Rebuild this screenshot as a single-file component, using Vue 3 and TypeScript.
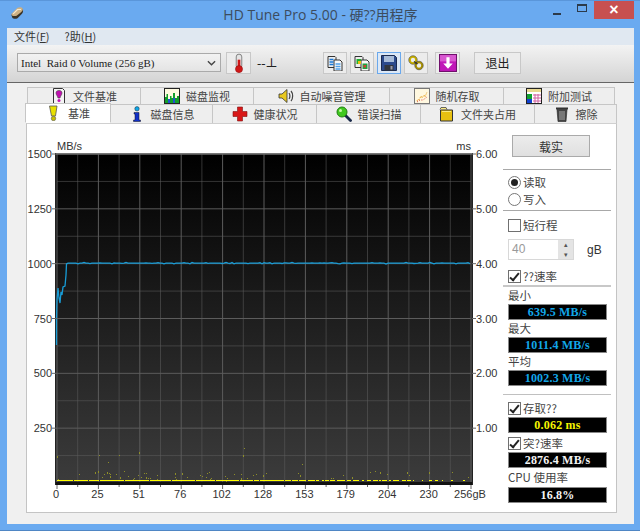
<script setup lang="ts">
import { computed } from 'vue'

interface Tab { label: string; icon: string; w: number; active?: boolean }

const icons: Record<string, string> = {
  doc: '<path d="M2.5.5h9l2 2v13h-11z" fill="#f4f4f4" stroke="#333"/><path d="M8 2.5c-2 0-3 1-3 2.5 0 1.5 1.5 3 2 5h2c.5-2 2-3.500 2-5 0-1.500-1-2.500-3-2.500z" fill="#c010b0" stroke="#444" stroke-width=".6"/><circle cx="8" cy="12.500" r="1.500" fill="#c010b0"/>',
  chart: '<rect x=".5" y=".5" width="15" height="15" fill="#fffbe0" stroke="#222"/><path d="M1 15V9h1.500V6H4v5h2V8h1.500v2H9V5h2v5h2V8h2v7z" fill="#12a02a"/><path d="M4 15v-4h2v4zM9 15v-5h2v5z" fill="#2050d0"/>',
  speaker: '<path d="M1 6h3l5-4.500v13L4 10H1z" fill="#e8c820" stroke="#333" stroke-width=".8"/><path d="M11 5c1.200 1.500 1.200 4.500 0 6M13 3c2.200 2.500 2.200 7.500 0 10" fill="none" stroke="#444" stroke-width="1.200"/>',
  random: '<rect x=".5" y=".5" width="15" height="15" fill="#fff8e0" stroke="#777"/><path d="M3 13l1-2 1 1 2-4 1 2 2-3 1 2 2-5" fill="none" stroke="#e8a020" stroke-dasharray="1 1"/><path d="M3 14l3-2 3 0 4-3" fill="none" stroke="#d84040" stroke-dasharray="1 1.500"/>',
  extra: '<rect x=".5" y=".5" width="15" height="15" fill="#fff" stroke="#222"/><rect x="1" y="1" width="14" height="3" fill="#e8d890"/><rect x="1" y="6" width="5" height="9" fill="#10a030"/><rect x="1" y="11" width="5" height="4" fill="#1040d0"/><path d="M7 7h8M7 10h8M7 13h8M9 6v9M12 6v9" stroke="#d060a0"/>',
  bulb: '<path d="M3.500 1h7.500l-1.500 10H5.500z" fill="#e8e000" stroke="#555" stroke-width=".8"/><circle cx="7.500" cy="13.500" r="2.200" fill="#c8c000" stroke="#555" stroke-width=".6"/>',
  info: '<circle cx="8" cy="2.800" r="2.200" fill="#10a8e8" stroke="#123" stroke-width=".5"/><path d="M5 6.500h5V14h1.500v1.500h-7V14H6V8H5z" fill="#1030c8" stroke="#112" stroke-width=".5"/>',
  cross: '<path d="M5.500 1h5v4.500H15v5h-4.500V15h-5v-4.500H1v-5h4.500z" fill="#d81818" stroke="#801010" stroke-width=".6"/>',
  search: '<path d="M9 9l5.500 5.500" stroke="#182848" stroke-width="2.800" stroke-linecap="round"/><circle cx="6" cy="6" r="5" fill="#40c820" stroke="#208010"/><circle cx="4.500" cy="4.500" r="1.500" fill="#c8f8a8"/>',
  folder: '<path d="M1 3.500l1-2h5l1 2" fill="#f8e880" stroke="#444" stroke-width=".8"/><path d="M1.500 4h12v11h-12z" fill="#e8c010" stroke="#333"/><path d="M3 5.500h9" stroke="#f8e880"/>',
  trash: '<path d="M3 3.500h10L12 15.500H4z" fill="#444" stroke="#222" stroke-width=".6"/><path d="M2 2.500h12" stroke="#333" stroke-width="2"/><path d="M6 5v9M8 5v9M10 5v9" stroke="#aaa"/>',
  copyBlue: '<path d="M1 1.500h7l1 1v10H1z" fill="#eee" stroke="#333"/><path d="M7 5h6l2 2v9H7z" fill="#f8f8f8" stroke="#333"/><path d="M2.500 4.500h4M2.500 7h4M2.500 9.500h4" stroke="#1878d8" stroke-width="1.500"/><path d="M8.500 9h5M8.500 11.500h5M8.500 14h5" stroke="#50a0e8" stroke-width="1.500"/>',
  copyChart: '<path d="M1 1.500h7l1 1v10H1z" fill="#eee" stroke="#333"/><path d="M7 5h6l2 2v9H7z" fill="#f8f8f8" stroke="#333"/><rect x="2.500" y="4" width="4.500" height="5" fill="#20b030"/><rect x="4" y="6" width="3" height="3" fill="#e8c010"/><rect x="8.500" y="8.500" width="5" height="5.500" fill="#20a040"/><rect x="9.500" y="10" width="2.500" height="2.500" fill="#d04030"/>',
  save: '<path d="M.5.500h13l2 2v13H.5z" fill="#2c4a8c" stroke="#1a2a50"/><rect x="3" y="1" width="10" height="6" fill="#a8bcd8"/><rect x="3.500" y="10" width="9" height="5.500" fill="#32363c"/><rect x="9.500" y="11" width="2" height="3.500" fill="#99a"/>',
  chain: '<circle cx="5" cy="5" r="3.200" fill="none" stroke="#c8b000" stroke-width="2"/><circle cx="11" cy="10.500" r="3.200" fill="none" stroke="#a89000" stroke-width="2"/><path d="M6 6.500l3.500 2.500" stroke="#333" stroke-width="1.500"/><circle cx="5" cy="5" r="4.300" fill="none" stroke="#333" stroke-width=".5"/><circle cx="11" cy="10.500" r="4.300" fill="none" stroke="#333" stroke-width=".5"/>',
  down: '<rect x=".5" y=".5" width="16" height="16" fill="#c018b8" stroke="#70106c"/><rect x="1" y="1" width="15" height="6" fill="#d858d0"/><path d="M7 3h3v6h3l-4.500 5L4 9h3z" fill="#fff"/>',
  thermo: '<rect x="5.500" y="1" width="5" height="13" rx="2.500" fill="#e4e4e4" stroke="#666" stroke-width=".7"/><rect x="6.800" y="6" width="2.400" height="8" fill="#d01818"/><circle cx="8" cy="14.500" r="3.200" fill="#d01818" stroke="#901010" stroke-width=".5"/>',
}

const upperTabs: Tab[] = [
  { label: '文件基准', icon: 'doc', w: 114 },
  { label: '磁盘监视', icon: 'chart', w: 113 },
  { label: '自动噪音管理', icon: 'speaker', w: 136 },
  { label: '随机存取', icon: 'random', w: 114 },
  { label: '附加测试', icon: 'extra', w: 111 },
]

const lowerTabs: Tab[] = [
  { label: '基准', icon: 'bulb', w: 86, active: true },
  { label: '磁盘信息', icon: 'info', w: 102 },
  { label: '健康状况', icon: 'cross', w: 104 },
  { label: '错误扫描', icon: 'search', w: 104 },
  { label: '文件夹占用', icon: 'folder', w: 114 },
  { label: '擦除', icon: 'trash', w: 82 },
]

const toolButtons = [
  { icon: 'copyBlue' },
  { icon: 'copyChart' },
  { icon: 'save', focused: true },
  { icon: 'chain' },
]

// chart geometry, in window coordinates (the svg viewBox starts at the panel corner)
const plot = { left: 57, right: 471, top: 154, bottom: 483 }
const cellW = (plot.right - plot.left) / 20
const cellH = (plot.bottom - plot.top) / 12

const leftLabels = [
  { t: '1500', row: 0 }, { t: '1250', row: 2 }, { t: '1000', row: 4 },
  { t: '750', row: 6 }, { t: '500', row: 8 }, { t: '250', row: 10 },
]
const rightLabels = ['6.00', '5.00', '4.00', '3.00', '2.00', '1.00']
const xLabels = ['0', '25', '51', '76', '102', '128', '153', '179', '204', '230', '256gB']

const gridX = computed(() => Array.from({ length: 21 }, (_, i) => plot.left + i * cellW))
const gridY = computed(() => Array.from({ length: 12 }, (_, i) => plot.top + i * cellH))

let seed = 37
function rnd() {
  seed = (seed * 16807) % 2147483647
  return seed / 2147483647
}

const readPath = computed(() => {
  let d = 'M56.5 345L56.5 320L57 300L58 288L59 298L60 303L61 292L62 295L63 287L65 286L66 275L66.500 264'
  for (let x = 68; x <= 471; x += 2) {
    d += `L${x} ${(263.2 + (rnd() > 0.7 ? (rnd() - 0.5) * 1.6 : 0)).toFixed(1)}`
  }
  return d
})

const accessLine = computed(() => {
  const out: { x: number; w: number }[] = []
  let x = 57
  while (x < 470) {
    // solid near the start of the disk, broken up further along
    const w = x < 290 ? 3 + Math.floor(rnd() * 22) : x < 410 ? 2 + Math.floor(rnd() * 7) : 1 + Math.floor(rnd() * 3)
    out.push({ x, w: Math.min(w, 471 - x) })
    x += w + (x < 290 ? 1 : x < 410 ? 1 + Math.floor(rnd() * 3) : 3 + Math.floor(rnd() * 8))
  }
  return out
})

const accessDots = computed(() => {
  const out = [
    { x: 57, y: 456 }, { x: 99, y: 455 }, { x: 108, y: 462 }, { x: 119, y: 455 }, { x: 139, y: 452 },
    { x: 244, y: 448 }, { x: 302, y: 464 }, { x: 207, y: 473 }, { x: 243, y: 455 }, { x: 343, y: 475 },
  ]
  for (let i = 0; i < 80; i++) {
    const x = 58 + rnd() * 412
    // the scatter thins out towards the end of the disk
    if (x > 300 && rnd() > 0.45) continue
    out.push({ x: Math.round(x), y: Math.round(471 + rnd() * 9) })
  }
  return out
})
</script>

<template>
  <div class="window">
    <div class="titlebar">
      <svg class="app-icon" viewBox="0 0 16 16" width="15" height="14">
        <path d="M1 10l7-7c2-1 5-1 6 1 1 2 0 4-2 6l-4 4c-2 1-5 1-6-1z" fill="#3a3428" />
        <path d="M1 9l7-7c2-1 5-1 6 1 .6 1.400-1 3-2 4l-5 4c-2 1-6 .5-6-2z" fill="#cdb184" />
        <path d="M3 9l5-5 4 0" fill="none" stroke="#f4e8d0" stroke-width="1.400" />
      </svg>
      <span class="title">HD Tune Pro 5.00 - 硬??用程序</span>
      <div class="caption">
        <span class="cap-btn"><i class="min" /></span>
        <span class="cap-btn"><i class="max" /></span>
        <span class="cap-btn close">×</span>
      </div>
    </div>

    <div class="client">
      <div class="menubar">
        <span>文件(<u>F</u>)</span>
        <span>?助(<u>H</u>)</span>
      </div>

      <div class="toolbar">
        <div class="combo">
          <span>Intel&nbsp; Raid 0 Volume (256 gB)</span>
          <svg viewBox="0 0 10 6" width="9" height="6"><path d="M1 1l4 4 4-4" fill="none" stroke="#444" stroke-width="1.500" /></svg>
        </div>
        <button class="tool thermo"><svg viewBox="0 0 16 18" width="18" height="20" v-html="icons.thermo" /></button>
        <span class="temp">--⊥</span>
        <div class="tool-group">
          <button v-for="b in toolButtons" :key="b.icon" class="tool" :class="{ focused: b.focused }">
            <svg viewBox="0 0 16 16" width="16" height="16" v-html="icons[b.icon]" />
          </button>
        </div>
        <button class="tool download"><svg viewBox="0 0 17 17" width="18" height="18" v-html="icons.down" /></button>
        <button class="tool exit">退出</button>
      </div>

      <div class="tabs">
        <div class="tab-row upper">
          <div v-for="t in upperTabs" :key="t.label" class="tab" :style="{ width: t.w + 'px' }">
            <svg viewBox="0 0 16 16" width="16" height="16" v-html="icons[t.icon]" />
            <span>{{ t.label }}</span>
          </div>
        </div>
        <div class="tab-row lower">
          <div v-for="t in lowerTabs" :key="t.label" class="tab" :class="{ active: t.active }" :style="{ width: t.w + 'px' }">
            <svg viewBox="0 0 16 16" width="16" height="16" v-html="icons[t.icon]" />
            <span>{{ t.label }}</span>
          </div>
        </div>
      </div>

      <div class="page">
        <svg class="chart" viewBox="27 124 477 388" width="477" height="388">
          <defs>
            <linearGradient id="plotBg" x1="0" y1="0" x2="0" y2="1">
              <stop offset="0" stop-color="#000" />
              <stop offset="1" stop-color="#3c3c3c" />
            </linearGradient>
          </defs>
          <rect x="55" y="153" width="418" height="332" fill="url(#plotBg)" />
          <g stroke="#5c5c5c">
            <line v-for="(x, i) in gridX" :key="'v' + i" :x1="x" :x2="x" :y1="plot.top" :y2="plot.bottom" :stroke-opacity="i % 2 ? 0.55 : 1" />
            <line v-for="(y, i) in gridY" :key="'h' + i" :x1="plot.left" :x2="plot.right" :y1="y" :y2="y" :stroke-opacity="i % 2 ? 0.55 : 1" />
          </g>
          <rect x="55" y="482" width="418" height="3" fill="#111" />
          <rect x="55" y="153" width="418" height="1.500" fill="#777" />
          <path d="M55.500 153V485M472.500 153V485" stroke="#222" />

          <g fill="#8e8e28">
            <rect v-for="(d, i) in accessDots" :key="'d' + i" :x="d.x" :y="d.y" width="1" :height="i % 4 ? 1 : 2" />
          </g>
          <g fill="#ffff00">
            <rect v-for="(s, i) in accessLine" :key="'s' + i" :x="s.x" y="480" :width="s.w" height="1" />
          </g>
          <path :d="readPath" fill="none" stroke="#189cd6" stroke-width="1.300" />

          <g stroke="#666">
            <line v-for="l in leftLabels" :key="l.t" x1="52" x2="57" :y1="plot.top + l.row * cellH" :y2="plot.top + l.row * cellH" />
            <line v-for="(l, i) in rightLabels" :key="l" x1="472" x2="476" :y1="plot.top + i * 2 * cellH" :y2="plot.top + i * 2 * cellH" />
            <line v-for="(x, i) in gridX" :key="'t' + i" :x1="x" :x2="x" y1="485" :y2="i % 2 ? 487 : 489" />
          </g>

          <g class="axis">
            <text x="57" y="150">MB/s</text>
            <text x="471" y="150" text-anchor="end">ms</text>
            <text v-for="l in leftLabels" :key="l.t" x="52" :y="plot.top + l.row * cellH + 4" text-anchor="end">{{ l.t }}</text>
            <text v-for="(l, i) in rightLabels" :key="l" x="476" :y="plot.top + i * 2 * cellH + 4">{{ l }}</text>
            <text v-for="(l, i) in xLabels" :key="l" :x="i === 10 ? 470 : plot.left - 1 + i * 2 * cellW" y="498" text-anchor="middle">{{ l }}</text>
          </g>
        </svg>

        <aside class="side">
          <button class="start">载实</button>
          <div class="sep first" />
          <label class="opt"><i class="radio on" />读取</label>
          <label class="opt"><i class="radio" />写入</label>
          <div class="sep second" />
          <label class="opt"><i class="check" />短行程</label>
          <div class="spin-row">
            <div class="spin">
              <span>40</span>
              <div class="arrows"><b>▴</b><b>▾</b></div>
            </div>
            <span class="unit">gB</span>
          </div>
          <label class="opt"><i class="check on" />??速率</label>
          <div class="sep third" />
          <div class="cap">最小</div>
          <div class="value blue">639.5 MB/s</div>
          <div class="cap">最大</div>
          <div class="value blue">1011.4 MB/s</div>
          <div class="cap">平均</div>
          <div class="value blue">1002.3 MB/s</div>
          <div class="sep fourth" />
          <label class="opt"><i class="check on" />存取??</label>
          <div class="value yellow">0.062 ms</div>
          <label class="opt burst"><i class="check on" />突?速率</label>
          <div class="value white">2876.4 MB/s</div>
          <div class="cap cpu">CPU 使用率</div>
          <div class="value white">16.8%</div>
        </aside>
      </div>
    </div>
  </div>
</template>

<style>
html, body {
  margin: 0;
  height: 531px;
  overflow: hidden;
  background: #6aaaf0;
}
</style>

<style scoped>
.window {
  width: 640px;
  height: 531px;
  box-sizing: border-box;
  padding: 0 6px 6px 7px;
  background: #6aaaf0;
  border-top: 1px solid #5a96da;
  border-bottom: 1px solid #4f86c4;
  display: flex;
  flex-direction: column;
  font-family: "Noto Sans CJK SC", "Liberation Sans", sans-serif;
  color: #3a3a3a;
}

.titlebar {
  height: 27px;
  flex: none;
  display: flex;
  align-items: flex-start;
  position: relative;
}

.app-icon {
  margin: 5px 0 0 3px;
}

.title {
  position: absolute;
  left: 0;
  right: 0;
  top: 3px;
  text-align: center;
  font: 14px "Open Sans", "Noto Sans CJK SC", sans-serif;
  color: #3c4c5e;
}

.caption {
  margin-left: auto;
  display: flex;
  align-items: flex-start;
}

.cap-btn {
  width: 25px;
  height: 18px;
  display: flex;
  align-items: center;
  justify-content: center;
}

.cap-btn .min {
  width: 8px;
  height: 2px;
  margin-top: 7px;
  background: #2c3a4a;
}

.cap-btn .max {
  width: 8px;
  height: 5px;
  margin-top: -4px;
  border: 1px solid #2c3a4a;
  border-top-width: 2px;
}

.cap-btn.close {
  width: 40px;
  background: #c75050;
  color: #fff;
  font: bold 16px "Liberation Sans", sans-serif;
}

.client {
  flex: 1;
  background: #f0f0f0;
  display: flex;
  flex-direction: column;
  min-height: 0;
}

.menubar {
  height: 17px;
  flex: none;
  display: flex;
  gap: 15px;
  padding-left: 7px;
  background: #e0e8f1;
  font-size: 11px;
  line-height: 17px;
  color: #333;
}

.toolbar {
  height: 38px;
  flex: none;
  box-sizing: border-box;
  display: flex;
  align-items: center;
  padding: 0 0 2px 10px;
  background: linear-gradient(#f3f3f3, #d4d4d4);
  border-bottom: 1px solid #666;
}

.combo {
  width: 204px;
  height: 19px;
  box-sizing: border-box;
  border: 1px solid #aaa;
  background: linear-gradient(#f2f2f2, #e4e4e4);
  display: flex;
  align-items: center;
  justify-content: space-between;
  padding: 0 4px 0 3px;
  font: 11px "Liberation Serif", serif;
  color: #222;
}

.tool {
  width: 24px;
  height: 22px;
  padding: 0;
  box-sizing: border-box;
  border: 1px solid #c8c8c8;
  background: #ececec;
  display: flex;
  align-items: center;
  justify-content: center;
  font-family: inherit;
}

.thermo {
  width: 25px;
  margin-left: 5px;
}

.temp {
  width: 72px;
  padding-left: 6px;
  box-sizing: border-box;
  font-size: 12px;
  font-weight: 500;
  color: #222;
}

.tool-group {
  display: flex;
  gap: 3px;
}

.focused {
  border-color: #6aa8ec;
  background: #dce8f6;
}

.download {
  margin-left: 7px;
  width: 25px;
}

.exit {
  margin-left: 14px;
  width: 47px;
  font-size: 12px;
  color: #222;
}

.tabs {
  flex: none;
  margin-top: 4px;
  padding-left: 18px;
}

.tab-row {
  display: flex;
  height: 19px;
  box-sizing: border-box;
}

.upper {
  padding-left: 2px;
  height: 17px;
}

.tab {
  box-sizing: border-box;
  flex: none;
  display: flex;
  align-items: center;
  justify-content: center;
  gap: 6px;
  border: 1px solid #c6c6c6;
  border-bottom: none;
  border-left: none;
  background: #eeeeee;
  font-size: 11px;
  color: #444;
}

.tab-row .tab:first-child {
  border-left: 1px solid #c6c6c6;
}

.tab svg {
  flex: none;
}

.tab.active {
  height: 20px;
  margin-top: -1px;
  background: #fff;
  position: relative;
  border-right: 1px solid #c6c6c6;
  border-bottom: 1px solid #fff;
  z-index: 1;
}

.page {
  width: 591px;
  height: 390px;
  box-sizing: border-box;
  margin-left: 19px;
  border: 1px solid #c4c4c4;
  border-top-color: #d0d0d0;
  background: #fff;
  display: flex;
}

.chart {
  flex: none;
}

.chart .axis text {
  font: 11px "Liberation Sans", sans-serif;
  fill: #333;
}

.side {
  width: 112px;
  flex: none;
  margin-top: 11px;
  display: flex;
  flex-direction: column;
  font-size: 11.500px;
  color: #444;
}

.start {
  width: 78px;
  height: 22px;
  flex: none;
  margin-left: 8px;
  padding: 0;
  border: 1px solid #aaa;
  background: linear-gradient(#ececec, #e0e0e0);
  font: 12px "Noto Sans CJK SC", sans-serif;
  color: #333;
}

.sep {
  height: 1px;
  background: #a8a8a8;
  width: 108px;
  margin-left: -1px;
  flex: none;
}

.sep.first {
  margin-top: 12px;
  margin-bottom: 4px;
}

.sep.second {
  margin-top: 2px;
  margin-bottom: 6px;
}

.sep.third {
  height: 2px;
  background: #c8c8c8;
}

.sep.fourth {
  margin-top: 8px;
  margin-bottom: 5px;
  background: #c0c0c0;
}

.opt {
  height: 17px;
  flex: none;
  display: flex;
  align-items: center;
  gap: 2px;
  padding-left: 4px;
  line-height: 17px;
}

.opt.burst {
  margin-top: 2px;
}

.radio {
  width: 13px;
  height: 13px;
  box-sizing: border-box;
  border: 1px solid #777;
  border-radius: 50%;
  background: #fff;
  display: flex;
  align-items: center;
  justify-content: center;
}

.radio.on::after {
  content: "";
  width: 7px;
  height: 7px;
  border-radius: 50%;
  background: #222;
}

.check {
  width: 13px;
  height: 13px;
  box-sizing: border-box;
  border: 1px solid #707070;
  background: #fff;
  position: relative;
}

.check.on::after {
  content: "";
  position: absolute;
  left: 3px;
  top: 0;
  width: 3px;
  height: 8px;
  border: solid #222;
  border-width: 0 2px 2px 0;
  transform: rotate(40deg);
}

.spin-row {
  display: flex;
  align-items: center;
  gap: 13px;
  margin: 5px 0 8px 4px;
  flex: none;
}

.spin {
  width: 66px;
  height: 21px;
  box-sizing: border-box;
  border: 1px solid #d8d8d8;
  display: flex;
  justify-content: space-between;
  padding-left: 3px;
  line-height: 19px;
  font-family: "Liberation Sans", sans-serif;
  font-size: 12px;
  color: #999;
}

.arrows {
  width: 15px;
  display: flex;
  flex-direction: column;
  background: #e4e4e4;
  font-size: 7px;
  line-height: 9.500px;
  text-align: center;
  color: #555;
}

.arrows b {
  font-weight: normal;
  height: 9.500px;
}

.unit {
  font: 12px "Liberation Sans", sans-serif;
  color: #333;
}

.cap {
  height: 17px;
  flex: none;
  padding-left: 4px;
  line-height: 17px;
}

.cap.cpu {
  height: 19px;
  line-height: 19px;
}

.value {
  width: 99px;
  height: 16px;
  margin-left: 4px;
  box-sizing: border-box;
  border: 1px solid #888;
  background: #000;
  text-align: center;
  font: bold 12px/14px "Liberation Serif", serif;
  letter-spacing: 0.2px;
  flex: none;
}

.blue { color: #12a6e8; }
.yellow { color: #f4f400; }
.white { color: #f4f4f4; }
</style>
